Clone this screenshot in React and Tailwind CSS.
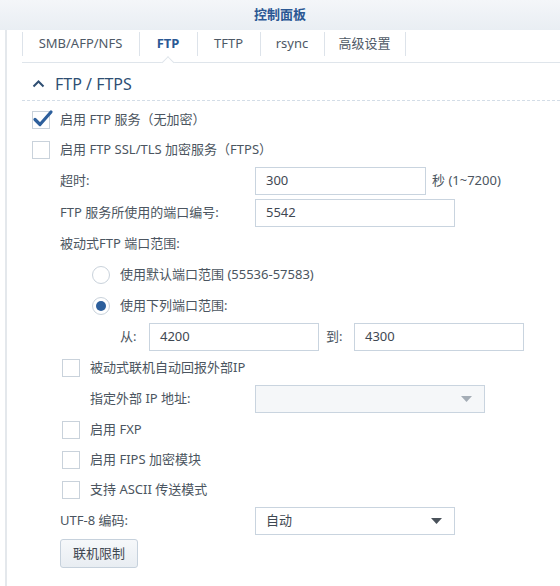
import React from "react";

const FONT = { fontFamily: '"Noto Sans", "Noto Sans CJK SC", sans-serif' };

function CheckBox({ checked }) {
  return (
    <span className="relative inline-block w-[18px] h-[18px] border border-[#c9d2db] bg-white shrink-0">
      {checked && (
        <svg className="absolute -left-[1px] -top-[3px]" width="22" height="20" viewBox="0 0 22 20">
          <path d="M3 10.5 L8 15.5 L19 3" fill="none" stroke="#2d5f9c" strokeWidth="3.2" strokeLinecap="round" strokeLinejoin="round" />
        </svg>
      )}
    </span>
  );
}

function Radio({ checked }) {
  return (
    <span className="flex items-center justify-center w-[18px] h-[18px] rounded-full border border-[#c9d2db] bg-white shrink-0">
      {checked && <span className="w-[10px] h-[10px] rounded-full bg-[#2d5f9c]" />}
    </span>
  );
}

function Caret({ color }) {
  return (
    <svg width="11" height="6" viewBox="0 0 11 6">
      <path d="M0 0 H11 L5.5 6 Z" fill={color} />
    </svg>
  );
}

function TextInput({ value, width }) {
  return (
    <div className={`h-[28px] border border-[#c9d4df] bg-white flex items-center px-[10px] text-[#3f4852] ${width}`}>
      {value}
    </div>
  );
}

export default function App() {
  const tabs = [
    { label: "SMB/AFP/NFS", w: "w-[117px]" },
    { label: "FTP", w: "w-[58px]", active: true },
    { label: "TFTP", w: "w-[63px]" },
    { label: "rsync", w: "w-[64px]" },
    { label: "高级设置", w: "w-[81px]" },
  ];

  return (
    <div className="w-[560px] h-[586px] bg-white overflow-hidden text-[13px] text-[#4b5560]" style={FONT}>
      {/* title bar */}
      <div className="h-[30px] flex items-center justify-center bg-gradient-to-b from-[#f4f6f9] to-[#e9eef3] text-[#2b5894] font-bold text-[13px]">
        控制面板
      </div>

      <div className="ml-[5px] h-[556px] border-l-2 border-[#e4e8ec] pl-[15px]">
        {/* tabs */}
        <div className="relative flex h-[33px] border-b border-[#dfe5eb]">
          {tabs.map((t) => (
            <div key={t.label} className={`relative flex items-center justify-center pb-[4px] ${t.w}`}>
              <span className="absolute left-0 top-[2px] bottom-[6px] border-l border-[#dde3ea]" />
              <span className={t.active ? "font-bold text-[#2b5894]" : "text-[#4e5966]"}>{t.label}</span>
              {t.active && (
                <span className="absolute left-1/2 -bottom-[5px] -translate-x-1/2 w-[9px] h-[9px] rotate-45 bg-white border-l border-t border-[#dfe5eb]" />
              )}
            </div>
          ))}
          <span className="border-l border-[#dde3ea] mt-[2px] mb-[6px]" />
        </div>

        {/* section header */}
        <div className="h-[34px] mt-[4px] flex items-center gap-[10px] pl-[10px] border-b border-dashed border-[#d3dde7] text-[#2f4f73] text-[16px]">
          <svg width="13" height="8" viewBox="0 0 13 8">
            <path d="M1.5 6.5 L6.5 1.5 L11.5 6.5" fill="none" stroke="#2f4f73" strokeWidth="2" />
          </svg>
          <span>FTP / FTPS</span>
        </div>

        <div className="pt-[4px]">
          <div className="h-[30px] flex items-center gap-[10px] pl-[10px]">
            <CheckBox checked />
            <span>启用 FTP 服务（无加密）</span>
          </div>
          <div className="h-[30px] flex items-center gap-[10px] pl-[10px]">
            <CheckBox />
            <span>启用 FTP SSL/TLS 加密服务（FTPS）</span>
          </div>

          <div className="h-[32px] flex items-center pl-[38px]">
            <span className="w-[195px]">超时:</span>
            <TextInput value="300" width="w-[171px]" />
            <span className="ml-[6px]">秒 (1~7200)</span>
          </div>
          <div className="h-[32px] flex items-center pl-[38px]">
            <span className="w-[195px]">FTP 服务所使用的端口编号:</span>
            <TextInput value="5542" width="w-[200px]" />
          </div>

          <div className="h-[30px] flex items-center pl-[38px]">被动式FTP 端口范围:</div>

          <div className="h-[31px] flex items-center gap-[10px] pl-[70px]">
            <Radio />
            <span>使用默认端口范围 (55536-57583)</span>
          </div>
          <div className="h-[31px] flex items-center gap-[10px] pl-[70px]">
            <Radio checked />
            <span>使用下列端口范围:</span>
          </div>
          <div className="h-[32px] flex items-center pl-[98px]">
            <span className="w-[29px]">从:</span>
            <TextInput value="4200" width="w-[170px]" />
            <span className="w-[35px] pl-[7px]">到:</span>
            <TextInput value="4300" width="w-[170px]" />
          </div>

          <div className="h-[30px] flex items-center gap-[10px] pl-[40px]">
            <CheckBox />
            <span>被动式联机自动回报外部IP</span>
          </div>
          <div className="h-[32px] flex items-center pl-[68px]">
            <span className="w-[165px]">指定外部 IP 地址:</span>
            <div className="w-[230px] h-[28px] border border-[#c9d4df] bg-[#f5f7f9] flex items-center justify-end pr-[12px]">
              <Caret color="#a4adb6" />
            </div>
          </div>

          <div className="h-[30px] flex items-center gap-[10px] pl-[40px]">
            <CheckBox />
            <span>启用 FXP</span>
          </div>
          <div className="h-[30px] flex items-center gap-[10px] pl-[40px]">
            <CheckBox />
            <span>启用 FIPS 加密模块</span>
          </div>
          <div className="h-[30px] flex items-center gap-[10px] pl-[40px]">
            <CheckBox />
            <span>支持 ASCII 传送模式</span>
          </div>

          <div className="h-[32px] flex items-center pl-[38px]">
            <span className="w-[195px]">UTF-8 编码:</span>
            <div className="w-[200px] h-[28px] border border-[#c9d4df] bg-white flex items-center justify-between pl-[10px] pr-[12px] text-[#3f4852]">
              <span>自动</span>
              <Caret color="#4a525b" />
            </div>
          </div>

          <div className="pl-[38px] pt-[2px]">
            <button className="h-[29px] w-[78px] rounded-[3px] border border-[#c6d1dc] bg-gradient-to-b from-[#f6f8fa] to-[#e8edf2] text-[#3f4852] text-[13px]">
              联机限制
            </button>
          </div>
        </div>
      </div>
    </div>
  );
}
